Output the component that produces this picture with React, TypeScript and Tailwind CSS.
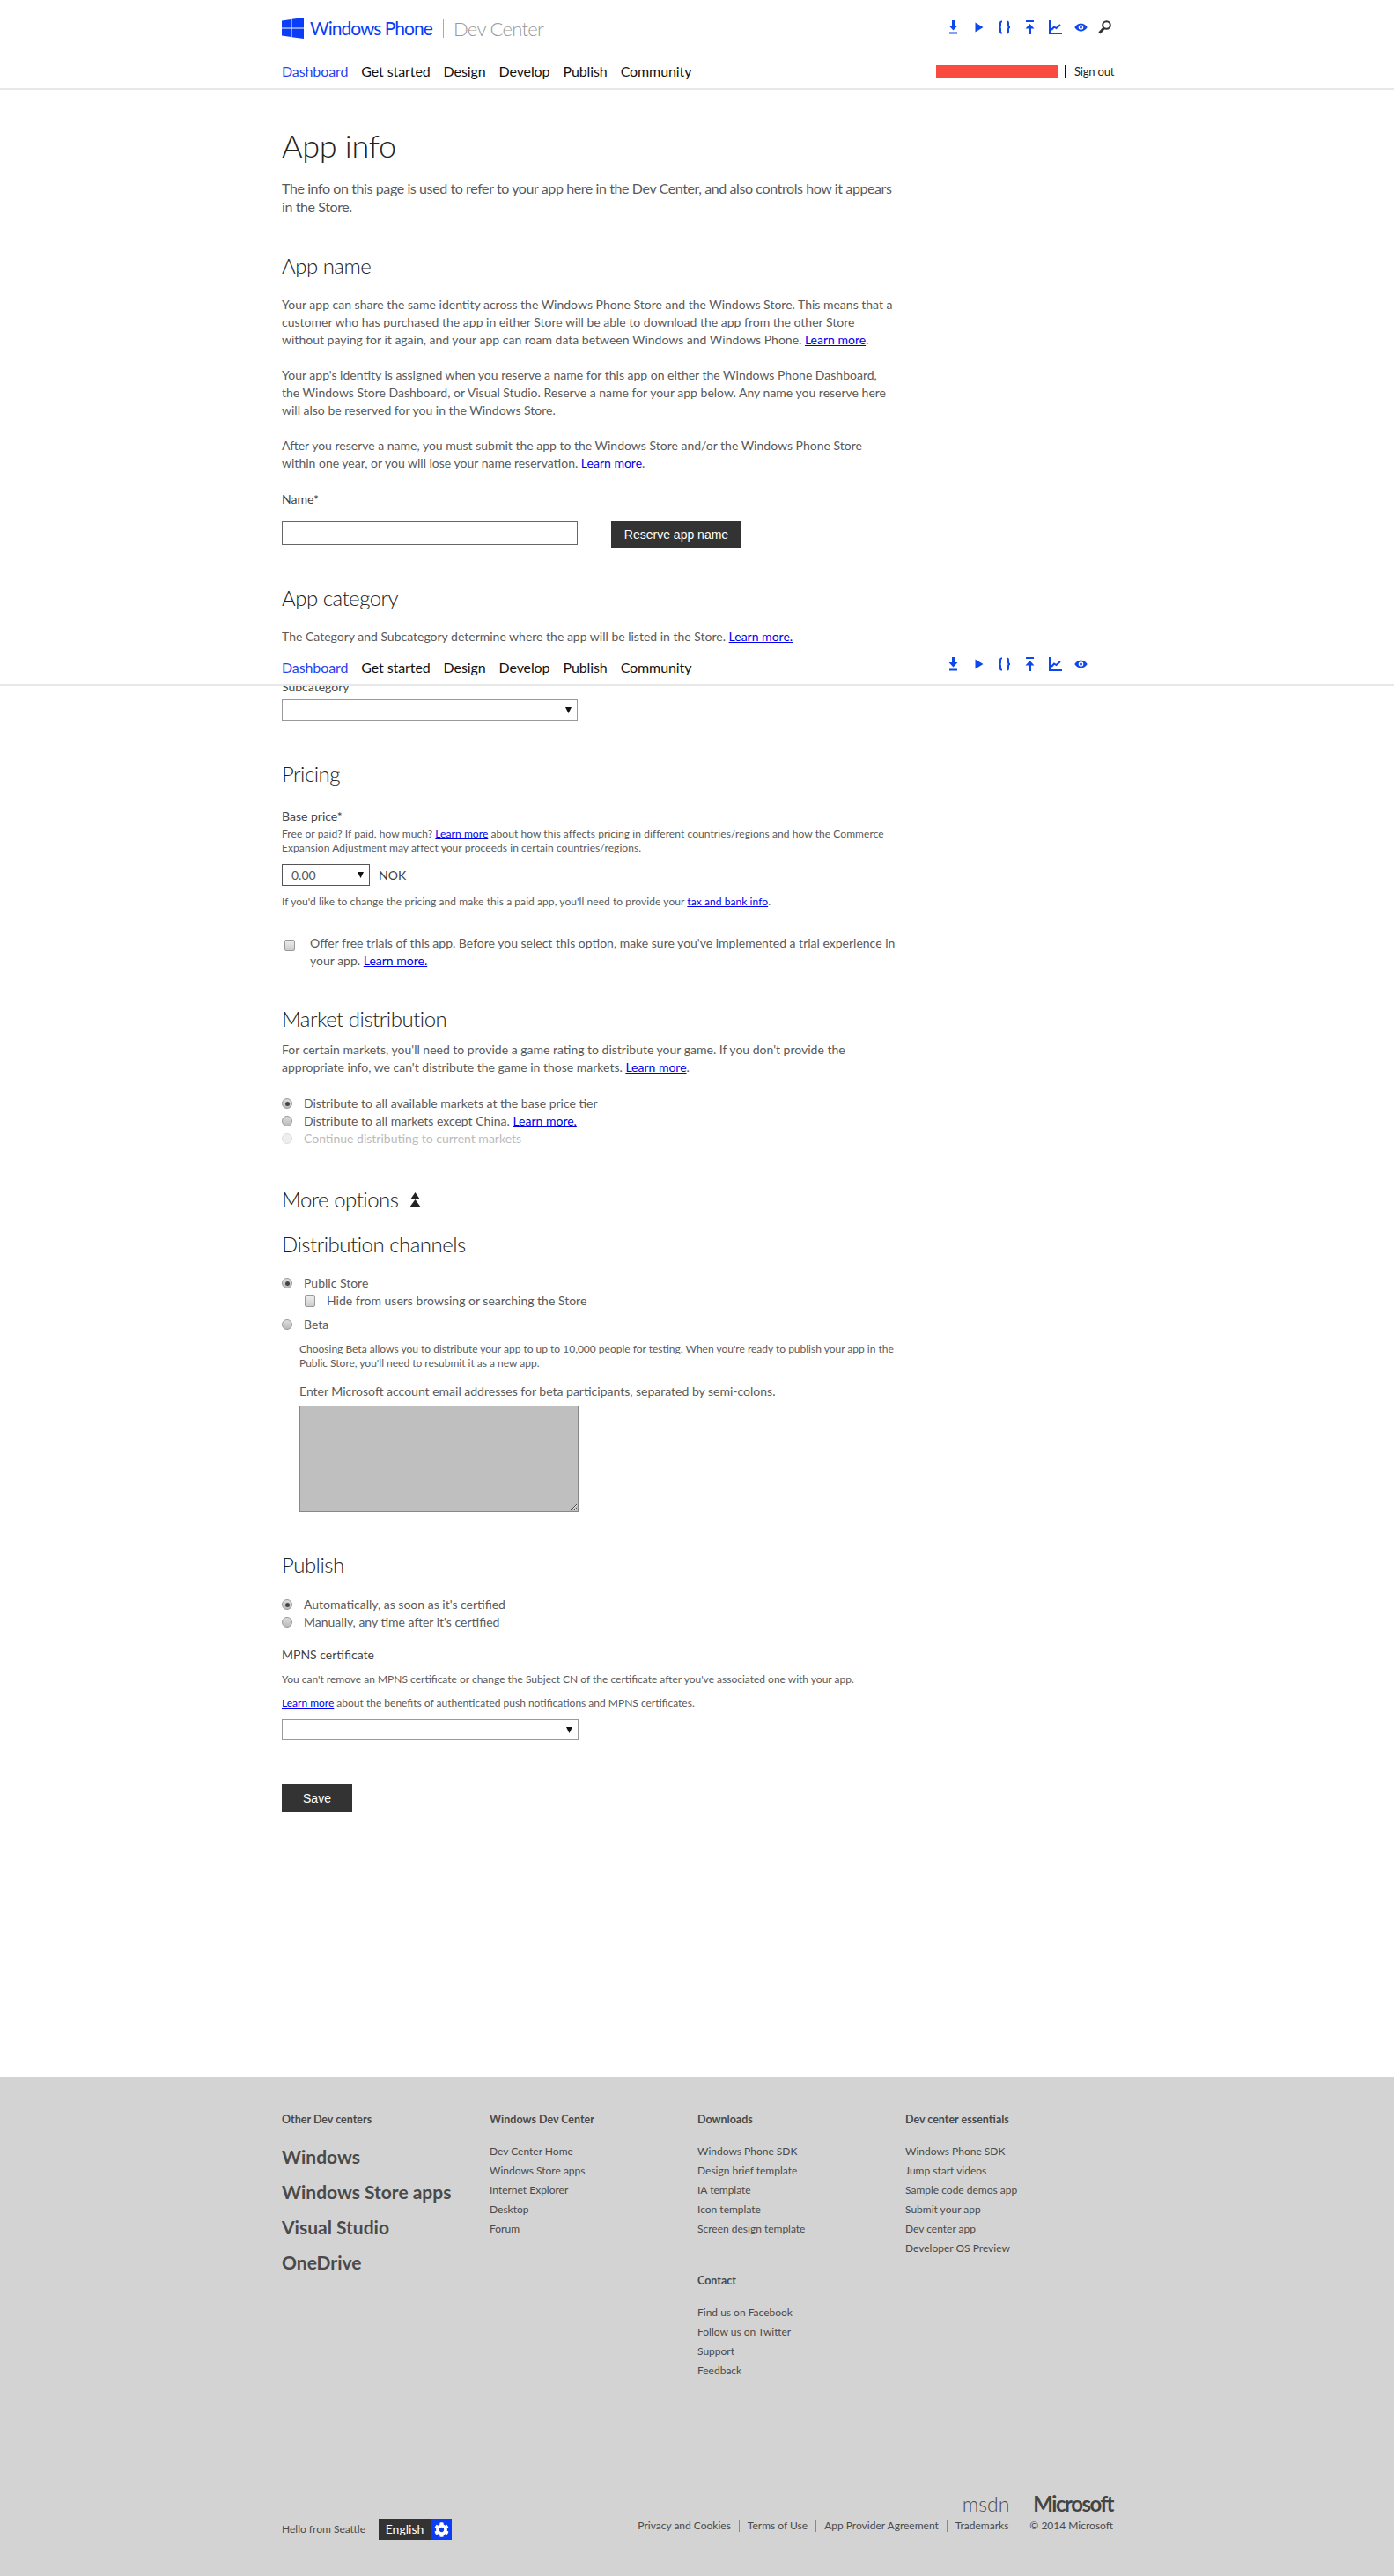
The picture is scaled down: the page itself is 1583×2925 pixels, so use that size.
import { FaCog } from "react-icons/fa";

const navItems = ["Dashboard", "Get started", "Design", "Develop", "Publish", "Community"];

const footerCols = [
  {
    title: "Windows Dev Center",
    links: ["Dev Center Home", "Windows Store apps", "Internet Explorer", "Desktop", "Forum"],
  },
  {
    title: "Downloads",
    links: ["Windows Phone SDK", "Design brief template", "IA template", "Icon template", "Screen design template"],
    extra: {
      title: "Contact",
      links: ["Find us on Facebook", "Follow us on Twitter", "Support", "Feedback"],
    },
  },
  {
    title: "Dev center essentials",
    links: ["Windows Phone SDK", "Jump start videos", "Sample code demos app", "Submit your app", "Dev center app", "Developer OS Preview"],
  },
];

const Nav = () => (
  <ul className="flex gap-[15px] text-[16px] leading-[20px] text-[#111] tracking-[-0.1px]">
    {navItems.map((item, i) => (
      <li key={item} className={i === 0 ? "text-[#2a3ff0]" : ""}>
        {item}
      </li>
    ))}
  </ul>
);

const TopIcons = ({ search }: { search?: boolean }) => (
  <div className="flex ml-auto mr-[-3px] text-[#0f47ef]">
    <div className="w-[29px] flex justify-center">
      <svg width="11" height="16" viewBox="0 0 11 16" fill="currentColor">
        <path d="M4 0h3v6h3.500L5.500 11.500 .5 6H4z" />
        <rect x="1" y="13.500" width="9" height="2" />
      </svg>
    </div>
    <div className="w-[29px] flex justify-center">
      <svg width="10" height="16" viewBox="0 0 10 16" fill="currentColor">
        <path d="M.5 2.500 9.500 8 .5 13.500z" />
      </svg>
    </div>
    <div className="w-[29px] flex justify-center">
      <svg width="15" height="16" viewBox="0 0 15 16" fill="none" stroke="currentColor" strokeWidth="2">
        <path d="M5 1.500H4C3 1.500 3 2.500 3 3v3c0 1-.5 2-2 2 1.500 0 2 1 2 2v3c0 .5 0 1.500 1 1.500h1M10 1.500h1c1 0 1 1 1 1.500v3c0 1 .5 2 2 2-1.500 0-2 1-2 2v3c0 .5 0 1.500-1 1.500h-1" />
      </svg>
    </div>
    <div className="w-[29px] flex justify-center">
      <svg width="11" height="16" viewBox="0 0 11 16" fill="currentColor">
        <rect x="1" y="0" width="9" height="2" />
        <path d="M5.500 4 10.500 9.500H7V16H4V9.500H.5z" />
      </svg>
    </div>
    <div className="w-[29px] flex justify-center">
      <svg width="15" height="16" viewBox="0 0 15 16" fill="none" stroke="currentColor" strokeWidth="2">
        <path d="M1 0v15h14" />
        <path d="M3 11l3-3.500 2.500 1.500L13 5" />
      </svg>
    </div>
    <div className="w-[29px] flex justify-center">
      <svg width="15" height="16" viewBox="0 0 15 16" fill="currentColor">
        <path d="M7.500 3.500C4 3.500 1.500 6 .3 8c1.200 2 3.700 4.500 7.200 4.500S13.500 10 14.700 8C13.500 6 11 3.500 7.500 3.500zm0 7.300a2.800 2.800 0 1 1 0-5.600 2.800 2.800 0 0 1 0 5.600z" />
        <circle cx="7.500" cy="8" r="1.500" />
      </svg>
    </div>
    <div className="w-[25px] flex justify-center">
      {search && (
        <svg width="15" height="16" viewBox="0 0 15 16" fill="none" stroke="#333" strokeWidth="2">
          <circle cx="9.500" cy="5.500" r="4.300" />
          <path d="M6.500 9 1.500 14.500" strokeWidth="3" />
        </svg>
      )}
    </div>
  </div>
);

const Link = ({ children }: { children: React.ReactNode }) => (
  <a className="text-[#0000ee] underline">{children}</a>
);

const H2 = ({ className, children }: { className?: string; children: React.ReactNode }) => (
  <h2 className={`text-[24px] leading-[32px] font-light text-[#222] tracking-[-0.5px] ${className}`}>{children}</h2>
);

const Radio = ({ checked, disabled }: { checked?: boolean; disabled?: boolean }) => (
  <span
    className={`inline-flex items-center justify-center w-[12px] h-[12px] rounded-full border shrink-0 ${
      disabled ? "border-[#ddd] bg-[#eee]" : "border-[#999] bg-gradient-to-b from-[#ddd] to-[#bbb]"
    }`}
  >
    {checked && <span className="w-[5px] h-[5px] rounded-full bg-[#444]" />}
  </span>
);

const Checkbox = () => (
  <span className="inline-block w-[12px] h-[13px] rounded-[2px] border border-[#999] bg-gradient-to-b from-[#eee] to-[#ccc] shrink-0" />
);

const Select = ({ className, value }: { className?: string; value?: string }) => (
  <div className={`relative flex items-center border bg-white ${className}`}>
    {value && <span className="pl-[10px] text-[14px] text-[#555]">{value}</span>}
    <svg className="absolute right-[6px] top-[8px]" width="7" height="7" viewBox="0 0 7 7" fill="#111">
      <path d="M0 0h7L3.500 7z" />
    </svg>
  </div>
);

const RadioRow = ({ checked, disabled, children }: { checked?: boolean; disabled?: boolean; children: React.ReactNode }) => (
  <div className={`flex items-center gap-[13px] h-[20px] ${disabled ? "text-[#bbb]" : ""}`}>
    <Radio checked={checked} disabled={disabled} />
    <span>{children}</span>
  </div>
);

const FooterList = ({ links }: { links: string[] }) => (
  <ul className="mt-[17px] text-[12px] leading-[22px]">
    {links.map((l) => (
      <li key={l}>{l}</li>
    ))}
  </ul>
);

export default function App() {
  return (
    <div className="relative w-[1583px] bg-white font-['Lato',sans-serif] text-[14px] leading-[20px] text-[#5a5a5a]">
      <header className="h-[102px] border-b-2 border-[#e8e8e8]">
        <div className="ml-[320px] w-[944px]">
          <div className="flex h-[71px] pt-[20px]">
            <svg width="25" height="24" viewBox="0 0 25 24" fill="#0a3df5" className="mr-[7px]">
              <path d="M0 3.500 10.500 2V11.500H0zM11.500 1.800 25 0V11.500H11.500zM0 12.500H10.500V22L0 20.500zM11.500 12.500H25V24L11.500 22.200z" />
            </svg>
            <span className="text-[21px] leading-[24px] tracking-[-1px] text-[#0a3df5] w-[138px] whitespace-nowrap">Windows Phone</span>
            <span className="ml-[13px] mt-[2px] h-[21px] border-l border-[#aaa]" />
            <span className="ml-[11px] w-[104px] text-[22px] leading-[26px] tracking-[-0.7px] font-light text-[#999] whitespace-nowrap">Dev Center</span>
            <div className="mt-[3px] flex-1 flex">
              <TopIcons search />
            </div>
          </div>
          <div className="flex items-center">
            <Nav />
            <div className="ml-auto flex items-center">
              <div className="w-[138px] h-[15px] bg-[#fa4b40] border-b border-[#bbb]" />
              <span className="ml-[8px] h-[15px] border-l border-[#111]" />
              <span className="ml-[10px] w-[44px] text-[13px] tracking-[-0.2px] text-[#222] whitespace-nowrap">Sign out</span>
            </div>
          </div>
        </div>
      </header>

      <main className="ml-[320px] w-[697px]">
        <h1 className="mt-[41px] text-[36px] leading-[44px] font-light text-[#222] tracking-[-0.3px]">App info</h1>
        <p className="mt-[16px] text-[16px] leading-[21px] tracking-[-0.4px]">
          The info on this page is used to refer to your app here in the Dev Center, and also controls how it appears in the Store.
        </p>

        <H2 className="mt-[41px]">App name</H2>
        <p className="mt-[18px]">
          Your app can share the same identity across the Windows Phone Store and the Windows Store. This means that a customer who has purchased the app in either Store will be able to download the app from the other Store without paying for it again, and your app can roam data between Windows and Windows Phone. <Link>Learn more</Link>.
        </p>
        <p className="mt-[20px]">
          Your app's identity is assigned when you reserve a name for this app on either the Windows Phone Dashboard, the Windows Store Dashboard, or Visual Studio. Reserve a name for your app below. Any name you reserve here will also be reserved for you in the Windows Store.
        </p>
        <p className="mt-[20px]">
          After you reserve a name, you must submit the app to the Windows Store and/or the Windows Phone Store within one year, or you will lose your name reservation. <Link>Learn more</Link>.
        </p>
        <p className="mt-[21px] text-[#444]">Name*</p>
        <div className="mt-[15px] flex items-start h-[30px]">
          <input className="w-[336px] h-[27px] border border-[#666]" />
          <button className="ml-[38px] w-[148px] h-[30px] bg-[#333] text-white text-[14px] font-['Liberation_Sans',sans-serif]">
            Reserve app name
          </button>
        </div>

        <H2 className="mt-[41px]">App category</H2>
        <p className="mt-[18px]">
          The Category and Subcategory determine where the app will be listed in the Store. <Link>Learn more.</Link>
        </p>
        <p className="mt-[37px] text-[#444]">Subcategory</p>
        <Select className="mt-[4px] w-[336px] h-[25px] border-[#999]" />

        <H2 className="mt-[44px]">Pricing</H2>
        <p className="mt-[22px] text-[#444]">Base price*</p>
        <p className="mt-[2px] text-[12px] leading-[16px] tracking-[0.07px]">
          Free or paid? If paid, how much? <Link>Learn more</Link> about how this affects pricing in different countries/regions and how the Commerce Expansion Adjustment may affect your proceeds in certain countries/regions.
        </p>
        <div className="mt-[10px] flex items-center">
          <Select className="w-[100px] h-[25px] border-[#555]" value="0.00" />
          <span className="ml-[10px] text-[#444]">NOK</span>
        </div>
        <p className="mt-[10px] text-[12px] leading-[16px] tracking-[0.07px]">
          If you'd like to change the pricing and make this a paid app, you'll need to provide your <Link>tax and bank info</Link>.
        </p>
        <div className="mt-[29px] flex">
          <span className="ml-[3px] mt-[4px]">
            <Checkbox />
          </span>
          <p className="ml-[17px]">
            Offer free trials of this app. Before you select this option, make sure you've implemented a trial experience in your app. <Link>Learn more.</Link>
          </p>
        </div>

        <H2 className="mt-[40px]">Market distribution</H2>
        <p className="mt-[9px]">
          For certain markets, you'll need to provide a game rating to distribute your game. If you don't provide the appropriate info, we can't distribute the game in those markets. <Link>Learn more</Link>.
        </p>
        <div className="mt-[21px]">
          <RadioRow checked>Distribute to all available markets at the base price tier</RadioRow>
          <RadioRow>
            Distribute to all markets except China. <Link>Learn more.</Link>
          </RadioRow>
          <RadioRow disabled>Continue distributing to current markets</RadioRow>
        </div>

        <H2 className="mt-[43px] flex items-center">
          More options
          <svg className="ml-[13px]" width="13" height="17" viewBox="0 0 13 17" fill="#222">
            <path d="M6.500 0 12 8H1zM6.500 8 13 17H0z" />
          </svg>
        </H2>
        <H2 className="mt-[19px]">Distribution channels</H2>
        <div className="mt-[18px]">
          <RadioRow checked>Public Store</RadioRow>
          <div className="flex items-center gap-[13px] h-[20px] ml-[26px]">
            <Checkbox />
            <span>Hide from users browsing or searching the Store</span>
          </div>
          <div className="mt-[7px]">
            <RadioRow>Beta</RadioRow>
          </div>
        </div>
        <div className="ml-[20px]">
          <p className="mt-[10px] text-[12px] leading-[16px]">
            Choosing Beta allows you to distribute your app to up to 10,000 people for testing. When you're ready to publish your app in the Public Store, you'll need to resubmit it as a new app.
          </p>
          <p className="mt-[14px]">Enter Microsoft account email addresses for beta participants, separated by semi-colons.</p>
          <textarea className="block mt-[6px] w-[317px] h-[121px] bg-[#bfbfbf] border border-[#888] resize" />
        </div>

        <H2 className="mt-[44px]">Publish</H2>
        <div className="mt-[19px]">
          <RadioRow checked>Automatically, as soon as it's certified</RadioRow>
          <RadioRow>Manually, any time after it's certified</RadioRow>
        </div>
        <p className="mt-[17px] text-[#444]">MPNS certificate</p>
        <p className="mt-[10px] text-[12px] leading-[16px]">
          You can't remove an MPNS certificate or change the Subject CN of the certificate after you've associated one with your app.
        </p>
        <p className="mt-[11px] text-[12px] leading-[16px]">
          <Link>Learn more</Link> about the benefits of authenticated push notifications and MPNS certificates.
        </p>
        <Select className="mt-[10px] w-[337px] h-[24px] border-[#999]" />
        <button className="block mt-[50px] w-[80px] h-[32px] bg-[#333] text-white text-[14px] font-['Liberation_Sans',sans-serif]">
          Save
        </button>
      </main>

      <footer className="mt-[300px] h-[569px] bg-[#d3d3d3] text-[#4a4a4a]">
        <div className="ml-[320px] w-[944px] pt-[41px]">
          <div className="grid grid-cols-4 h-[304px]">
            <div>
              <h3 className="text-[12.5px] leading-[16px] font-bold">Other Dev centers</h3>
              <ul className="mt-[14px] text-[21px] leading-[40px] font-bold">
                <li>Windows</li>
                <li>Windows Store apps</li>
                <li>Visual Studio</li>
                <li>OneDrive</li>
              </ul>
            </div>
            {footerCols.map((col) => (
              <div key={col.title}>
                <h3 className="text-[12.5px] leading-[16px] font-bold">{col.title}</h3>
                <FooterList links={col.links} />
                {col.extra && (
                  <>
                    <h3 className="mt-[40px] text-[12.5px] leading-[16px] font-bold">{col.extra.title}</h3>
                    <FooterList links={col.extra.links} />
                  </>
                )}
              </div>
            ))}
          </div>
          <div className="mt-[124px] flex justify-between">
            <div className="flex items-center h-[24px] mt-[33px] text-[12px]">
              <span className="w-[110px]">Hello from Seattle</span>
              <div className="flex h-[24px]">
                <span className="w-[59px] bg-[#333] text-white text-[14px] leading-[24px] text-center">English</span>
                <span className="w-[24px] bg-[#0a3df5] flex items-center justify-center text-white">
                  <FaCog size={17} />
                </span>
              </div>
            </div>
            <div className="flex flex-col items-end">
              <div className="flex items-center h-[32px]">
                <span className="text-[23px] font-light">msdn</span>
                <span className="ml-[27px] text-[24px] font-bold tracking-[-1.5px] text-[#444]">Microsoft</span>
              </div>
              <div className="mt-[1px] flex items-center text-[12px] leading-[16px]">
                <span>Privacy and Cookies</span>
                <span className="mx-[9px] h-[14px] border-l border-[#888]" />
                <span>Terms of Use</span>
                <span className="mx-[9px] h-[14px] border-l border-[#888]" />
                <span>App Provider Agreement</span>
                <span className="mx-[9px] h-[14px] border-l border-[#888]" />
                <span>Trademarks</span>
                <span className="ml-[24px]">© 2014 Microsoft</span>
              </div>
            </div>
          </div>
        </div>
      </footer>

      {/* fixed nav caught mid-page by the full page capture */}
      <div className="absolute left-0 top-[738px] w-full h-[41px] bg-white border-b-2 border-[#e8e8e8]">
        <div className="ml-[320px] w-[944px] flex items-start pt-[10px]">
          <Nav />
          <div className="flex-1 flex -mt-[2px]">
            <TopIcons />
          </div>
        </div>
      </div>
    </div>
  );
}
